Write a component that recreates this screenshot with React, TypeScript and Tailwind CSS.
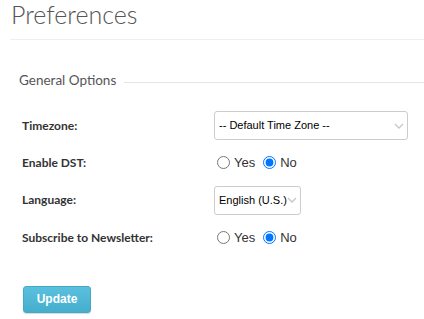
import React from "react";

const Chevron = () => (
  <svg width="10" height="6" viewBox="0 0 10 6" className="pointer-events-none absolute right-[4px] top-1/2 -translate-y-1/2">
    <path d="M1 1l4 4 4-4" fill="none" stroke="#c8c8c8" strokeWidth="1.4" />
  </svg>
);

const Radio = ({ name }: { name: string }) => (
  <div className="flex items-center text-[13px] font-normal text-[#333] font-['Liberation_Sans',Arial,sans-serif]">
    <input type="radio" name={name} className="m-0 ml-[3px] w-[13px] h-[13px]" />
    <span className="ml-[4px]">Yes</span>
    <input type="radio" name={name} defaultChecked className="m-0 ml-[8px] w-[13px] h-[13px]" />
    <span className="ml-[4px]">No</span>
  </div>
);

export default function App() {
  return (
    <div className="w-[424px] h-[319px] bg-white overflow-hidden font-['Lato','Noto_Sans',sans-serif]">
      <div className="pl-[10px]">
        <h1 className="pl-[1px] text-[25px] leading-[29px] font-light text-[#555] h-[39px]">Preferences</h1>
        <div className="border-t border-[#eee]" />
      </div>
      <div className="mt-[31px] pl-[19px] flex items-center">
        <span className="text-[13.5px] leading-[18px] text-[#555]">General Options</span>
        <div className="flex-1 ml-[8px] mt-[4px] border-t border-[#e5e5e5]" />
      </div>
      <div className="mt-[18px] pl-[22px] grid grid-cols-[192px_1fr] auto-rows-[37.3px] items-center text-[12px] font-bold text-[#333]">
        <div>Timezone:</div>
        <div className="relative w-[194px]">
          <select className="appearance-none w-full h-[29px] border border-[#ccc] rounded-[3px] pl-[4px] text-[11px] font-normal text-black bg-white font-['Liberation_Sans',Arial,sans-serif] outline-none">
            <option>-- Default Time Zone --</option>
          </select>
          <Chevron />
        </div>
        <div>Enable DST:</div>
        <Radio name="dst" />
        <div>Language:</div>
        <div className="relative w-[87px]">
          <select className="appearance-none w-full h-[29px] border border-[#ccc] rounded-[3px] pl-[4px] text-[11px] font-normal text-black bg-white font-['Liberation_Sans',Arial,sans-serif] outline-none">
            <option>English (U.S.)</option>
          </select>
          <Chevron />
        </div>
        <div>Subscribe to Newsletter:</div>
        <Radio name="news" />
      </div>
      <div className="mt-[29px] pl-[23px]">
        <button className="w-[68px] h-[27px] rounded-[3px] border border-[#46a8c6] bg-gradient-to-b from-[#5bc0de] to-[#45aecd] text-white text-[12px] font-bold font-['Liberation_Sans',Arial,sans-serif] shadow-[0_1px_1px_rgba(0,0,0,0.15)]">
          Update
        </button>
      </div>
    </div>
  );
}
